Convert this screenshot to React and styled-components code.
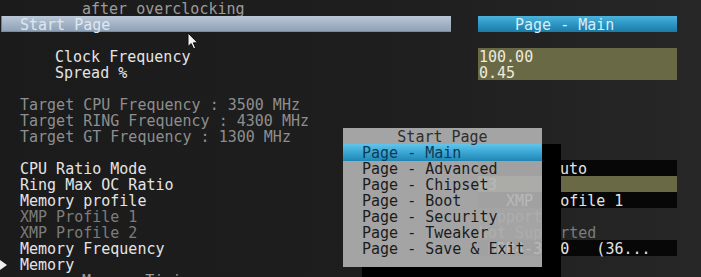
import styled, { createGlobalStyle } from 'styled-components';

const GlobalStyle = createGlobalStyle`
  html, body {
    margin: 0;
    padding: 0;
    background: #1d1d1d;
  }
`;

const Screen = styled.div`
  position: relative;
  width: 701px;
  height: 277px;
  overflow: hidden;
  background: linear-gradient(90deg, #1b1b1b 0%, #1e1e1e 55%, #272727 100%);
  font-family: 'DejaVu Sans Mono', 'Liberation Mono', monospace;
  font-size: 15px;
  line-height: 16px;
  color: #e4e4e4;
  white-space: pre;
`;

const Row = styled.div`
  display: grid;
  grid-template-columns: 478px 199px;
  grid-template-rows: 16px;
  height: 16px;
`;

const tones = {
  white: '#e4e4e4',
  info: '#8e8e8e',
  note: '#9c9c9c',
  off: '#7c7c7c',
};

const Label = styled.div`
  display: flex;
  align-items: flex-start;
  gap: 13px;
  padding-top: 1px;
  padding-left: ${(p) => p.$indent ?? 20}px;
  color: ${(p) => tones[p.$tone || 'white']};
`;

const Marker = styled.span`
  width: 0;
  height: 0;
  margin-top: 3px;
  margin-left: -20px;
  border-top: 5px solid transparent;
  border-bottom: 5px solid transparent;
  border-left: 7px solid #f0f0f0;
`;

const StartBar = styled.div`
  margin-left: 1px;
  margin-right: 27px;
  padding-top: 1px;
  padding-left: 19px;
  color: #dde7ef;
  background: linear-gradient(180deg, #b9c7d6 0%, #a3b3c6 50%, #8f9fb3 100%);
  box-shadow: inset 1px 0 0 #6f7f92, inset 0 -1px 0 #7c8ca0;
`;

const values = {
  blue: 'linear-gradient(180deg, #4bb2da 0%, #2b93c2 55%, #1c7aa6 100%)',
  olive: '#6a6946',
  black: '#070707',
  none: 'transparent',
};

const Value = styled.div`
  padding-top: 1px;
  padding-left: ${(p) => p.$indent ?? 1}px;
  background: ${(p) => values[p.$variant || 'none']};
  color: ${(p) =>
    p.$variant === 'blue' ? '#d4eef8' : p.$variant === 'olive' ? '#ecebdc' : tones[p.$tone || 'white']};
`;

const Popup = styled.div`
  position: absolute;
  left: 343px;
  top: 128px;
  width: 199px;
  height: 139px;
  background: rgba(178, 178, 178, 0.9);
  box-shadow: 19px 16px 0 #000;
  color: #1c1c1c;
`;

const PopupTitle = styled.div`
  height: 16px;
  padding-top: 1px;
  box-sizing: border-box;
  text-align: center;
  color: #2e2e2e;
`;

const PopupItem = styled.div`
  box-sizing: border-box;
  padding-top: 1px;
  padding-left: 19px;
  color: ${(p) => (p.$active ? '#0d3b57' : '#1c1c1c')};
  background: ${(p) =>
    p.$active ? 'linear-gradient(180deg, #62c4ea 0%, #3aa6d4 50%, #1f86b3 100%)' : 'transparent'};
  height: ${(p) => (p.$active ? 17 : 16)}px;
  margin-bottom: ${(p) => (p.$active ? -1 : 0)}px;
`;

const Cursor = styled.svg`
  position: absolute;
  left: 187px;
  top: 32px;
`;

const pages = [
  'Page - Main',
  'Page - Advanced',
  'Page - Chipset',
  'Page - Boot',
  'Page - Security',
  'Page - Tweaker',
  'Page - Save & Exit',
];

const Blank = () => <Row />;

export default function App() {
  return (
    <>
      <GlobalStyle />
      <Screen>
        <Row>
          <Label $indent={82} $tone="note">after overclocking</Label>
        </Row>
        <Row>
          <StartBar>Start Page</StartBar>
          <Value $variant="blue" $indent={37}>Page - Main</Value>
        </Row>
        <Blank />
        <Row>
          <Label $indent={55}>Clock Frequency</Label>
          <Value $variant="olive">100.00</Value>
        </Row>
        <Row>
          <Label $indent={55}>Spread %</Label>
          <Value $variant="olive">0.45</Value>
        </Row>
        <Blank />
        <Row>
          <Label $tone="info">Target CPU Frequency : 3500 MHz</Label>
        </Row>
        <Row>
          <Label $tone="info">Target RING Frequency : 4300 MHz</Label>
        </Row>
        <Row>
          <Label $tone="info">Target GT Frequency : 1300 MHz</Label>
        </Row>
        <Blank />
        <Row>
          <Label>CPU Ratio Mode</Label>
          <Value $variant="black" $indent={73}>Auto</Value>
        </Row>
        <Row>
          <Label>Ring Max OC Ratio</Label>
          <Value $variant="olive">43</Value>
        </Row>
        <Row>
          <Label>Memory profile</Label>
          <Value $variant="black" $indent={28}>XMP Profile 1</Value>
        </Row>
        <Row>
          <Label $tone="off">XMP Profile 1</Label>
          <Value $tone="off">Supported</Value>
        </Row>
        <Row>
          <Label $tone="off">XMP Profile 2</Label>
          <Value $tone="off">Not Supported</Value>
        </Row>
        <Row>
          <Label>Memory Frequency</Label>
          <Value $variant="black" $indent={10}>DDR4-3200   (36...</Value>
        </Row>
        <Row>
          <Label>
            <Marker />
            Memory
          </Label>
        </Row>
        <Row>
          <Label $indent={82} $tone="note">Memory Timings</Label>
        </Row>

        <Popup>
          <PopupTitle>Start Page</PopupTitle>
          {pages.map((page, i) => (
            <PopupItem key={page} $active={i === 0}>
              {page}
            </PopupItem>
          ))}
        </Popup>

        <Cursor width="13" height="18" viewBox="0 0 13 18">
          <path
            d="M1 1 L1 14.5 L4.2 11.6 L6.6 16.8 L8.6 15.9 L6.3 10.8 L10.6 10.8 Z"
            fill="#f4f4f4"
            stroke="#111"
            strokeWidth="1"
            strokeLinejoin="round"
          />
        </Cursor>
      </Screen>
    </>
  );
}
